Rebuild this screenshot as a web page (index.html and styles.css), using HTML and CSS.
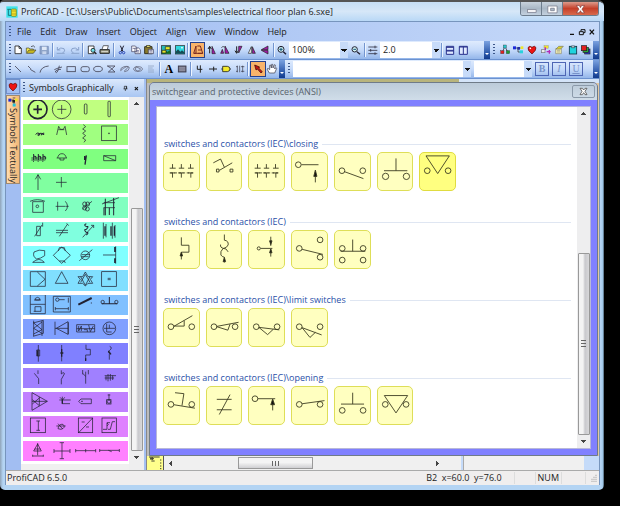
FILE: index.html
```html
<!DOCTYPE html>
<html lang="en">
<head>
<meta charset="utf-8">
<title>ProfiCAD</title>
<link rel="stylesheet" href="styles.css">
</head>
<body>
<div class="window">
  <header class="titlebar">
    <svg class="app-icon" viewBox="0 0 36 36"><rect x="1" y="1" width="34" height="34" fill="#3fe3ea"/><path d="M7 10V28M4 10h11M7 28h9" stroke="#157a80" stroke-width="3" fill="none"/><rect x="16" y="9" width="15" height="22" rx="3" fill="#f5e02a" stroke="#6b7a10" stroke-width="2"/><path d="M17 15h13M17 24h13" stroke="#9b9410" stroke-width="2"/></svg>
    <h1>ProfiCAD - [C:\Users\Public\Documents\samples\electrical floor plan 6.sxe]</h1>
    <div class="caption">
      <button aria-label="Minimize"><svg viewBox="0 0 42 39"><rect x="8" y="22" width="28" height="8" fill="#fff" stroke="#667" stroke-width="2"/></svg></button>
      <button aria-label="Maximize"><svg viewBox="0 0 42 39"><path d="M6 10h30v22H6zM15 17v8h12v-8z" fill="#fff" fill-rule="evenodd" stroke="#667" stroke-width="2"/></svg></button>
      <button class="close" aria-label="Close"><svg viewBox="0 0 42 39"><path d="M8 8h9l4 7 4-7h9l-8 12 8 12h-9l-4-7-4 7H8l8-12z" fill="#fff" stroke="#733" stroke-width="2"/></svg></button>
    </div>
  </header>

  <div class="client">
    <nav class="menubar">
      <i class="grip"></i>
      <button>File</button><button>Edit</button><button>Draw</button><button>Insert</button><button>Object</button><button>Align</button><button>View</button><button>Window</button><button>Help</button>
      <div class="mdi">
        <button aria-label="Minimize document"><svg viewBox="0 0 24 30"><path d="M6 22h12" stroke="#111" stroke-width="4"/></svg></button>
        <button aria-label="Restore document"><svg viewBox="0 0 24 30"><path d="M9 12V8h12v9h-4M4 14h12v9H4z" fill="none" stroke="#111" stroke-width="3"/></svg></button>
        <button aria-label="Close document"><svg viewBox="0 0 24 30"><path d="M5 8L18 22M18 8L5 22" stroke="#111" stroke-width="4"/></svg></button>
      </div>
    </nav>

    <div class="toolbar">
      <i class="grip"></i>
      <div class="tools tools-main">
        <button aria-label="New"><svg viewBox="38 130 36 36"><path d="M47 136h12l7 7v16H47zM59 136v7h7" fill="#fff" stroke="#222" stroke-width="2.5"/></svg></button>
        <button aria-label="Open"><svg viewBox="78 130 36 36"><path d="M82 156v-14h8l3 3h10v4" fill="#f4e84a" stroke="#443" stroke-width="2"/><path d="M82 158l8-10h21l-8 10z" fill="#c8b820" stroke="#443" stroke-width="2"/><path d="M96 138q8-6 12 2" fill="none" stroke="#222" stroke-width="2"/></svg></button>
        <button aria-label="Save"><svg viewBox="119 130 36 36"><path d="M125 137h25v23h-25z" fill="#8fa5c9" stroke="#6f87b4" stroke-width="2"/><rect x="131" y="138" width="14" height="10" fill="#dfe8f6"/><rect x="132" y="152" width="12" height="8" fill="#c9d6ec"/></svg></button>
        <i class="sep"></i>
        <button aria-label="Undo"><svg viewBox="169 130 36 36"><path d="M176 139v9h9M177 148q9-10 19-4 6 7-4 13M174 158h24" fill="none" stroke="#8ba3cc" stroke-width="3"/></svg></button>
        <button aria-label="Redo"><svg viewBox="208 130 36 36"><path d="M237 139v9h-9M236 148q-9-10-19-4-6 7 4 13M215 158h24" fill="none" stroke="#8ba3cc" stroke-width="3"/></svg></button>
        <i class="sep"></i>
        <button aria-label="Print preview"><svg viewBox="262 130 36 36"><path d="M269 136h17v23h-17z" fill="#fff" stroke="#222" stroke-width="2.5"/><circle cx="283" cy="149" r="6" fill="#6fe0e8" stroke="#222" stroke-width="2.5"/><path d="M287 154l6 6" stroke="#222" stroke-width="4"/></svg></button>
        <button aria-label="Print"><svg viewBox="301 130 36 36"><path d="M310 146l4-11h15l-3 11" fill="#fff" stroke="#222" stroke-width="2"/><path d="M304 147h28v11h-28z" fill="#999a80" stroke="#222" stroke-width="3"/><path d="M308 153h20" stroke="#fff" stroke-width="2"/></svg></button>
        <i class="sep"></i>
        <button aria-label="Cut"><svg viewBox="352 130 36 36"><path d="M365 135l8 18M375 135l-8 18" stroke="#223" stroke-width="3"/><circle cx="365" cy="156" r="3.5" fill="none" stroke="#2a49b8" stroke-width="3"/><circle cx="375" cy="156" r="3.5" fill="none" stroke="#2a49b8" stroke-width="3"/></svg></button>
        <button aria-label="Copy"><svg viewBox="393 130 36 36"><path d="M398 136h11l4 4v13h-15zM408 142h11l5 5v12h-16z" fill="#fff" stroke="#335" stroke-width="2"/><path d="M401 143h7M412 150h8M412 154h8" stroke="#447" stroke-width="2"/></svg></button>
        <button aria-label="Paste"><svg viewBox="433 130 36 36"><path d="M438 138h22v21h-22z" fill="#8b7b2c" stroke="#332" stroke-width="3"/><rect x="444" y="134" width="10" height="6" fill="#ddd36a" stroke="#332" stroke-width="2"/><path d="M449 146h15v13h-15z" fill="#fff" stroke="#224" stroke-width="2"/><path d="M452 150h9M452 154h9" stroke="#447" stroke-width="2"/></svg></button>
        <i class="sep"></i>
        <button aria-label="Insert symbol"><svg viewBox="483 130 36 36"><rect x="487" y="135" width="28" height="25" fill="#25b8b8" stroke="#222" stroke-width="2"/><path d="M488 159l9-12 8 6 9-5v11z" fill="#176b20"/><path d="M499 138h14v9h-14zM489 149h12v8h-12z" fill="#e4ea28" stroke="#222" stroke-width="2"/></svg></button>
        <button aria-label="Insert picture"><svg viewBox="523 130 36 36"><rect x="527" y="135" width="28" height="25" fill="#2fd6dd" stroke="#222" stroke-width="2"/><path d="M528 159v-6l7-7 7 7 5-4 7 6v4z" fill="#164c55"/><circle cx="547" cy="141" r="2.500" fill="#fff"/></svg></button>
        <i class="sep"></i>
        <button class="on" aria-label="Align symbols"><svg viewBox="574 130 36 36"><path d="M579 158l7-22v22zM590 136h9l7 22h-14M592 148h10M580 158h26" fill="none" stroke="#7a2a20" stroke-width="3"/></svg></button>
        <button aria-label="Rotate left"><svg viewBox="613 130 36 36"><path d="M624 158v-20M619 145l5-8 5 8" fill="none" stroke="#222" stroke-width="3"/><path d="M631 159v-22l10 22z" fill="#a11ca8" stroke="#222" stroke-width="2"/></svg></button>
        <button aria-label="Mirror"><svg viewBox="653 130 36 36"><path d="M658 158h9l-4-12zM671 158v-22l12 22z" fill="#a11ca8" stroke="#222" stroke-width="2"/><path d="M660 141q5-7 10-1" fill="none" stroke="#222" stroke-width="2"/></svg></button>
        <button aria-label="Rotate right"><svg viewBox="694 130 36 36"><path d="M705 137v20M700 150l5 8 5-8" fill="none" stroke="#222" stroke-width="3"/><path d="M711 137v20l10-20z" fill="#a11ca8" stroke="#222" stroke-width="2"/></svg></button>
        <button aria-label="Flip vertically"><svg viewBox="732 130 36 36"><path d="M739 158l9-20v20z" fill="#fff" stroke="#222" stroke-width="2"/><path d="M751 158v-20l9 20z" fill="#a11ca8" stroke="#222" stroke-width="2"/></svg></button>
        <button aria-label="Flip horizontally"><svg viewBox="773 130 36 36"><path d="M800 136v11h-20z" fill="#a11ca8" stroke="#222" stroke-width="2"/><path d="M800 160v-11h-20z" fill="#a11ca8" stroke="#222" stroke-width="2"/></svg></button>
        <i class="sep"></i>
        <button aria-label="Zoom in"><svg viewBox="827 130 36 36"><circle cx="842" cy="146" r="9" fill="#d5f3f3" stroke="#223" stroke-width="3"/><path d="M837 146h10M842 141v10" stroke="#157" stroke-width="3"/><path d="M849 153l8 8" stroke="#223" stroke-width="4"/></svg></button>
      </div>
      <label class="combo zoom-level"><select aria-label="Zoom"><option>100%</option></select></label>
      <button class="tool" aria-label="Zoom out"><svg viewBox="120 130 36 36"><circle cx="134" cy="146" r="8" fill="#d5f3f3" stroke="#223" stroke-width="3"/><path d="M130 146h8" stroke="#157" stroke-width="3"/><path d="M141 153l9 8" stroke="#223" stroke-width="4"/></svg></button>
      <i class="sep"></i>
      <button class="tool" aria-label="Line spacing"><svg viewBox="170 130 36 36"><path d="M174 139h27M174 149h27M174 159h27M194 135v8M181 145v8M194 155v8" stroke="#334" stroke-width="2.500"/></svg></button>
      <label class="combo line-width"><select aria-label="Line width"><option>2.0</option></select></label>
      <i class="sep"></i>
      <button class="tool" aria-label="Tile horizontally"><svg viewBox="405 130 36 36"><path d="M412 137h22v24h-22zM412 140h22M412 149h22M412 151h22" fill="#dfe9ff" stroke="#27308c" stroke-width="3"/></svg></button>
      <button class="tool" aria-label="Tile vertically"><svg viewBox="445 130 36 36"><path d="M452 137h24v24h-24zM452 139h24M464 138v22" fill="#dfe9ff" stroke="#27308c" stroke-width="3"/></svg></button>
      <span class="fill"></span>
      <button class="overflow" aria-label="Toolbar options"></button>
      <i class="grip"></i>
      <div class="tools tools-panels">
        <button aria-label="Tree"><svg viewBox="564 130 36 36"><path d="M582 138l-9 17M582 138l9 17" stroke="#222" stroke-width="2"/><rect x="577" y="133" width="9" height="9" fill="#29c7cf" stroke="#222"/><rect x="569" y="150" width="10" height="9" fill="#e02222" stroke="#222"/><rect x="586" y="150" width="10" height="9" fill="#1d9c35" stroke="#222"/></svg></button>
        <button aria-label="Symbols"><svg viewBox="605 130 36 36"><path d="M615 142h8v12h6M623 142h8" fill="none" stroke="#222" stroke-width="2"/><rect x="608" y="137" width="9" height="9" fill="#1b2ad8"/><rect x="621" y="139" width="8" height="8" fill="#222ea0"/><rect x="631" y="137" width="8" height="8" fill="#eee72c"/><rect x="628" y="149" width="10" height="9" fill="#27d2dd"/></svg></button>
        <button aria-label="Favourites"><svg viewBox="644 130 36 36"><path d="M662 160q-14-11-12-19 5-8 12-1 8-7 12 1 1 8-12 19z" fill="#ee1414" stroke="#511" stroke-width="2"/><circle cx="657" cy="143" r="2.500" fill="#fff"/></svg></button>
        <button aria-label="Links"><svg viewBox="686 130 36 36"><rect x="698" y="135" width="13" height="8" fill="#f0e22e" stroke="#886"/><rect x="690" y="147" width="11" height="9" fill="#eee" stroke="#777" stroke-width="2"/><path d="M706 153h12M714 148v11M702 140v8" stroke="#b32ab8" stroke-width="4"/></svg></button>
        <button aria-label="Properties"><svg viewBox="726 130 36 36"><path d="M734 144h17v15h-17z" fill="#f4f0b0" stroke="#887" stroke-width="2"/><path d="M735 145l8-8h14l-8 8z" fill="#dcd22c" stroke="#776" stroke-width="2"/><path d="M738 150h9M738 154h9" stroke="#998" stroke-width="2"/></svg></button>
        <button aria-label="Clipboard"><svg viewBox="766 130 36 36"><rect x="773" y="137" width="22" height="23" fill="#20d3dd" stroke="#134" stroke-width="2.500"/><path d="M779 136h10v5h-10z" fill="#fff" stroke="#134" stroke-width="2"/></svg></button>
        <button aria-label="Layers"><svg viewBox="807 130 36 36"><rect x="821" y="145" width="16" height="15" fill="#2a3bdc" stroke="#222" stroke-width="2"/><rect x="816" y="140" width="16" height="15" fill="#24a839" stroke="#222" stroke-width="2"/><rect x="811" y="135" width="16" height="15" fill="#e32020" stroke="#222" stroke-width="2"/></svg></button>
      </div>
      <button class="overflow" aria-label="Panel options"></button>
    </div>

    <div class="toolbar">
      <i class="grip"></i>
      <div class="tools tools-draw">
        <button aria-label="Line"><svg viewBox="36 186 36 36"><path d="M45 195l18 18" stroke="#445" stroke-width="2.500"/></svg></button>
        <button aria-label="Polyline"><svg viewBox="77 186 36 36"><path d="M86 195l8 8v3l14 8" fill="none" stroke="#445" stroke-width="2.500"/></svg></button>
        <button aria-label="Arc"><svg viewBox="117 186 36 36"><path d="M123 215q3-18 26-20" fill="none" stroke="#445" stroke-width="2.500"/></svg></button>
        <button aria-label="Curve"><svg viewBox="158 186 36 36"><path d="M165 206q12-6 23-8M180 194q-4 20-9 21-4-1-2-5 8-6 16-5" fill="none" stroke="#445" stroke-width="2.500"/></svg></button>
        <button aria-label="Rectangle"><svg viewBox="198 186 36 36"><rect x="204" y="197" width="25" height="15" fill="none" stroke="#445" stroke-width="2.500"/></svg></button>
        <button aria-label="Rounded rectangle"><svg viewBox="238 186 36 36"><rect x="244" y="197" width="25" height="15" rx="6" fill="none" stroke="#445" stroke-width="2.500"/></svg></button>
        <button aria-label="Ellipse"><svg viewBox="278 186 36 36"><ellipse cx="296" cy="204" rx="13" ry="8" fill="none" stroke="#445" stroke-width="2.500"/></svg></button>
        <button aria-label="Polygon"><svg viewBox="319 186 36 36"><path d="M326 195h23l-20 18h20l-14-13z" fill="none" stroke="#445" stroke-width="2.500"/></svg></button>
        <button aria-label="Closed curve"><svg viewBox="359 186 36 36"><path d="M364 209q-2-9 10-12 16-3 16 4-2 10-14 11-4-2 7-9 8-6-1-6-12 5-18 12z" fill="none" stroke="#556" stroke-width="2"/></svg></button>
        <button aria-label="Node"><svg viewBox="399 186 36 36"><ellipse cx="417" cy="204" rx="13" ry="7" fill="none" stroke="#556" stroke-width="2"/><path d="M411 197l14 7-8 7-8-5z" fill="none" stroke="#556" stroke-width="2"/></svg></button>
        <button aria-label="Hatch"><svg viewBox="439 186 36 36"><path d="M448 195h18M448 201h14M448 207h18M448 213h18" stroke="#8797b5" stroke-width="2"/></svg></button>
        <i class="sep"></i>
        <button class="letter" aria-label="Text">A</button>
        <button aria-label="Image"><svg viewBox="531 186 36 36"><rect x="538" y="195" width="23" height="18" fill="#778" stroke="#334" stroke-width="2.500"/><path d="M541 200h17M541 204h17M541 208h17" stroke="#aab" stroke-width="1.500"/></svg></button>
        <i class="sep"></i>
        <button aria-label="Wire"><svg viewBox="580 186 36 36"><path d="M590 194v11h15M599 193v22" fill="none" stroke="#222" stroke-width="3"/></svg></button>
        <button aria-label="Connection"><svg viewBox="620 186 36 36"><path d="M626 204h24M640 197v14" stroke="#222" stroke-width="3"/></svg></button>
        <button aria-label="Label"><svg viewBox="662 186 36 36"><path d="M670 196h14q8 1 8 8t-8 8h-14z" fill="#f3ea2c" stroke="#222" stroke-width="2.500"/><path d="M665 204h5M692 204h3" stroke="#222" stroke-width="2"/></svg></button>
        <button aria-label="Terminals"><svg viewBox="701 186 36 36"><path d="M711 194v20M718 194v20M727 194v20M707 197h5M707 211h5M722 197h10M722 211h10" stroke="#334" stroke-width="2"/></svg></button>
        <i class="sep"></i>
        <button class="on" aria-label="Select"><svg viewBox="752 186 36 36"><path d="M760 192l15 6-3 3 11 11-4 4-11-12-4 3z" fill="#c21a14" stroke="#300" stroke-width="2"/></svg></button>
        <button aria-label="Pan"><svg viewBox="795 186 36 36"><path d="M805 216l-7-12 3-2 5 4v-13l3-1 2 9 1-11h3l1 11 4-10 3 1-2 12 4-4 2 2-6 14z" fill="#fff" stroke="#334" stroke-width="2"/></svg></button>
      </div>
      <button class="overflow" aria-label="Drawing options"></button>
      <i class="grip"></i>
      <label class="combo font-name"><select aria-label="Font"><option></option></select></label>
      <label class="combo font-size"><select aria-label="Font size"><option></option></select></label>
      <div class="styles">
        <button><b>B</b></button><button><em>I</em></button><button><u>U</u></button>
      </div>
      <button class="overflow" aria-label="Font options"></button>
    </div>

    <main class="workspace">
      <div class="dock-tabs">
        <button class="dock-tab-heart" aria-label="Favourites"><svg viewBox="644 130 36 36"><path d="M662 160q-14-11-12-19 5-8 12-1 8-7 12 1 1 8-12 19z" fill="#ee1414" stroke="#511" stroke-width="2"/></svg></button>
        <button class="dock-tab"><svg viewBox="0 0 30 36"><rect x="1" y="8" width="9" height="9" fill="#1b2ad8"/><path d="M10 12h8v13M14 6h8" fill="none" stroke="#222" stroke-width="2"/><rect x="13" y="12" width="8" height="8" fill="#222"/><rect x="21" y="8" width="8" height="8" fill="#eee72c"/><rect x="14" y="23" width="9" height="9" fill="#27c2dd"/></svg><span>Symbols Textually</span></button>
      </div>

      <section class="palette">
        <header><i class="grip"></i><h2>Symbols Graphically</h2>
          <button aria-label="Pin"><svg viewBox="0 0 27 27"><path d="M9 5h9v10M9 5v10M6 15h15M13 15v8M17 5v10" fill="none" stroke="#111" stroke-width="2.500"/></svg></button>
          <button aria-label="Close panel"><svg viewBox="0 0 27 27"><path d="M7 8l12 12M19 8L7 20" stroke="#111" stroke-width="4"/></svg></button>
        </header>
        <div class="palette-body">
          <div class="swatches">
            <button class="c1" aria-label="Lamps"><svg viewBox="70 75 313 61"><circle cx="113" cy="103" r="28" stroke-width="5"/><path d="M100 103h26M113 90v26" stroke-width="5"/><circle cx="185" cy="103" r="28"/><path d="M172 103h27M185 90v27"/><rect x="253" y="87" width="8" height="30" rx="3"/><rect x="324" y="79" width="7" height="46" rx="2"/></svg></button>
            <button class="c2" aria-label="Coils"><svg viewBox="70 148 313 61"><path d="M107 180q4-8 10-4 5 6-2 7-6-2 5-7 6-3 4 6M126 181v-6l5 6v-7" stroke-width="3"/><path d="M170 181l6-26 5 9h9l5-9 5 26M175 165h18M250 150l7 6-9 7 9 6-9 7 9 7-9 7 9 6-5 7"/><rect x="305" y="154" width="44" height="44"/><circle cx="327" cy="176" r="1.500"/></svg></button>
            <button class="c3" aria-label="Contacts"><svg viewBox="70 221 313 61"><path d="M94 248h45M94 254h42"/><path d="M101 236v18M115 236v18M129 236v18M101 243q9-3 7 9M115 243q9-3 7 9M129 243q9-3 7 9M99 258h3M113 258h3M127 258h3" stroke-width="3"/><path d="M170 248h31M173 248q2-13 13-13 10 0 13 13M180 248v6h12v-6"/><path d="M259 240l-4 28M254 242v12" stroke-width="4"/><path d="M311 241h36v15h-36zM311 241l36 15"/></svg></button>
            <button class="c4" aria-label="Arrows"><svg viewBox="70 294 313 61"><path d="M114 345v-46M106 313l8-14 8 14M168 322h32M184 306v31"/></svg></button>
            <button class="c5" aria-label="Sockets"><svg viewBox="70 367 313 61"><path d="M98 413v-32h32v32zM90 380q22-10 45 0M167 395h28M173 381v27M196 380q13 15 0 29M196 395h10M247 403l29-23"/><circle cx="112" cy="395" r="4"/><circle cx="254" cy="388" r="6"/><circle cx="263" cy="388" r="6"/><circle cx="254" cy="400" r="6"/><circle cx="262" cy="403" r="6"/><path d="M306 388l51-19M311 384h34M311 399h34"/><path d="M316 372v50M328 399v22M341 370v52M312 399v23" stroke-width="3"/></svg></button>
            <button class="c6" aria-label="Variable parts"><svg viewBox="70 21 313 61"><path d="M110 34h11v28h-11zM104 64l22-34M128 23v12M168 46h36M168 53h36M178 64l24-36M200 25l6 7M248 67l33-36M273 31h8v8"/><path d="M259 26q-10 3 0 9q10-2 0 8q-10 0 0 9q10 0 0 8" stroke-width="3"/><path d="M310 23v48M318 27v40M337 23v48M345 30v38"/><path d="M315 34v28M333 34v28M343 34v28" stroke-width="4"/></svg></button>
            <button class="c7" aria-label="Machines"><svg viewBox="70 94 313 61"><path d="M102 112q15-9 32-4v15q-12 9-24 10-13-7-8-21zM98 143q20-17 35 0zM160 122l25-25 26 25-26 24zM175 109l3-10h15l3 10M178 139h15l3 6M238 138l39-33M246 120h24M244 126h22"/><circle cx="256" cy="122" r="13"/><path d="M309 121h38M347 95v52"/><path d="M345 97v15M345 131v14" stroke-width="5"/></svg></button>
            <button class="c8" aria-label="Boxes"><svg viewBox="70 167 313 61"><path d="M91 172h45v44H91zM112 173l23 22-23 20M166 207l19-35 19 35zM256 173l8 14h14l-7 8 7 12h-14l-8 8-8-8h-14l7-12-7-8h14zM242 187l14 26 14-26M242 204l14-24 14 24"/><rect x="305" y="172" width="44" height="44"/><path d="M323 192h9M323 196h9"/></svg></button>
            <button class="c9" aria-label="Switch boxes"><svg viewBox="70 240 313 61"><path d="M91 239h45v57H91zM91 268h45M105 275h18v14h-18zM101 289h5M106 250q7-6 13 0v5h-13zM102 255h21M160 244h51v47h-51zM177 254h17M205 248v15M166 281h39M166 276v10M205 276v10M274 262v4"/><circle cx="172" cy="254" r="5"/><path d="M235 269l40-20" stroke-width="6"/><path d="M305 266h47M328 246v20" stroke-width="3"/><circle cx="308" cy="261" r="5"/><circle cx="349" cy="261" r="5"/></svg></button>
            <button class="c10" aria-label="Converters"><svg viewBox="70 313 313 61"><path d="M101 318v46M126 318v46M99 325l31-8v39l-31 9M101 325l25 20-25 13M126 322l-25 19 25 15M165 321v40M169 341l35-20v38zM205 323v36M165 341h39M230 330h54v22h-54zM230 342h54M236 334v15l8-15v15M252 345h10v7M266 331l5 20 9-17"/><circle cx="328" cy="341" r="19"/><path d="M312 341h33M320 327v25h15M328 330v11"/></svg></button>
            <button class="c11" aria-label="Poles"><svg viewBox="70 386 313 61"><path d="M115 392v50M110 407h9v18h-9zM185 392v49M258 391v14h13v17h-14v14M329 396q10 4 0 12-9 6 2 10M328 418v18"/><path d="M113 408v17M185 404v23M181 416h9M257 432v8M325 410l8 10" stroke-width="4"/></svg></button>
            <button class="c12" aria-label="Switches"><svg viewBox="70 54 313 61"><path d="M114 61v11M103 70l13 16v16M184 61v11q9-8 9 0l-9 16v15M257 65v36M248 60v13M265 60v13M248 70l9 9M314 77h34M314 84h28M318 78v13M324 72v22M331 72v20M338 76v14"/></svg></button>
            <button class="c13" aria-label="Amplifiers"><svg viewBox="70 127 313 61"><path d="M96 129v53l46-27zM96 155h46M118 142v26M97 150l21 18M97 163l21-18M178 151h34M187 162h23M180 143l8 8 6-8M187 141v21M236 155l7-7h31v14h-31zM243 155h6M327 134v17M323 136h8"/><path d="M187 150v12" stroke-width="4"/><rect x="320" y="150" width="13" height="13"/><circle cx="327" cy="156" r="5"/></svg></button>
            <button class="c14" aria-label="Meters"><svg viewBox="70 200 313 61"><rect x="91" y="206" width="45" height="44"/><path d="M109 215h11M115 215v28M109 243h11M169 230h28M174 223l14 16M174 238q2-15 15-13 10 10-6 15z"/><rect x="235" y="206" width="43" height="44"/><path d="M236 250l42-44M245 218h9M258 233h9"/><rect x="306" y="206" width="43" height="44"/><path d="M309 240h12v-20h9M321 230q8-5 0-9M324 240h7l6-23h8"/></svg></button>
            <button class="c15" aria-label="Connections"><svg viewBox="70 272 313 61"><path d="M113 278v37M98 317h32M98 313v6M130 313v6M101 302l12-21 11 21zM104 296h18M162 302h48M186 277v48M162 296v12M210 296v12M179 277h13M179 325h13M227 301h60M227 296v10M287 296v10M257 296v10M299 300h59M299 296v9M358 296v9M325 300l10 4"/></svg></button>
          </div>
          <div class="scroll"><i class="up"></i><i class="space-top"></i><i class="thumb"></i><i class="down"></i></div>
        </div>
      </section>

      <section class="canvas">
        <div class="sheet-top"></div>
        <div class="sheet"></div>
        <footer class="sheet-foot"><i class="ruler"><svg viewBox="0 0 42 42"><path d="M0 3h32M3 8h12M6 3v9M10 3v9M7 15h10M33 12h4M33 21h4M33 30h4M33 38h4" stroke="#443" stroke-width="3" fill="none"/></svg></i><div class="hscroll"><i class="left"></i><i class="hthumb"></i><i class="right"></i></div><i class="corner"></i></footer>
      </section>

      <section class="dialog">
        <header><h2>switchgear and protective devices (ANSI)</h2><button aria-label="Close dialog"><svg viewBox="0 0 27 27"><path d="M3 4h7l4 5 4-5h6l-6 9 6 10h-6l-4-6-4 6H3l6-10z" fill="#fff" stroke="#555" stroke-width="2.500"/></svg></button></header>
        <div class="dialog-body">
          <div class="library">
            <h3>switches and contactors (IEC)\closing</h3>
            <div class="tiles">
              <button aria-label="Three-pole contact"><svg viewBox="70 232 110 117"><path d="M88 280h19M97 267v13M117 280h17M125 267v13M146 280h18M154 267v13M88 295h17M97 295v15M116 295h16M125 295v15M146 295h17M155 295v15"/><path d="M90 295h72" stroke-dasharray="8 5"/></svg></button>
              <button aria-label="Hand-operated contact"><svg viewBox="198 232 110 117"><path d="M237 287l41-24M253 277l-12-26-23 12"/><path d="M228 283h8v9h-8zM271 283h9v9h-9z"/></svg></button>
              <button aria-label="Three-pole switch"><svg viewBox="325 232 110 117"><path d="M343 280h19M352 267v13M372 280h17M380 267v13M401 280h18M409 267v13M343 295h17M352 295v15M371 295h16M380 295v15M401 295h17M410 295v15"/><path d="M345 295h72" stroke-dasharray="8 5"/></svg></button>
              <button aria-label="Pressure contact"><svg viewBox="453 232 110 117"><circle cx="473" cy="269" r="9"/><path d="M483 269h54M527 325v-30"/><path d="M527 286l-5 20h10z" fill="#111"/></svg></button>
              <button aria-label="Open contact"><svg viewBox="582 232 110 117"><circle cx="604" cy="288" r="9"/><circle cx="670" cy="288" r="9"/><path d="M612 291l60 22"/></svg></button>
              <button aria-label="Push button"><svg viewBox="18 232 110 117"><path d="M37 288h74M75 249v39"/><circle cx="42" cy="306" r="10"/><circle cx="108" cy="306" r="10"/></svg></button>
              <button class="active" aria-label="Limit contact"><svg viewBox="147 232 110 117"><path d="M166 241h74l-37 56z"/><circle cx="170" cy="288" r="9"/><circle cx="236" cy="288" r="9"/></svg></button>
            </div>
            <h3>switches and contactors (IEC)</h3>
            <div class="tiles">
              <button aria-label="Thermal contact"><svg viewBox="40 76 110 117"><path d="M95 96v25h24v22H95v23"/><path d="M95 143l-4 12h8z" fill="#111"/></svg></button>
              <button aria-label="Magnetic contact"><svg viewBox="168 76 110 117"><path d="M223 87v18q14 2 12 15-4 9-14 11-12-2-10-12M235 142q-6-13-16-11-10 10-7 21 4 6 11 7v17"/><path d="M223 160l-4 13h8z" fill="#111"/></svg></button>
              <button aria-label="Double contact"><svg viewBox="295 76 110 117"><circle cx="326" cy="131" r="5"/><path d="M332 131h37M364 94v29M364 157v-23"/><path d="M364 119l-4-12h8zM364 133l-4 12h8z" fill="#111"/></svg></button>
              <button aria-label="Changeover contact"><svg viewBox="423 76 110 117"><circle cx="446" cy="131" r="9"/><circle cx="512" cy="104" r="9"/><circle cx="512" cy="159" r="9"/><path d="M455 134l66 16"/></svg></button>
              <button aria-label="Double push button"><svg viewBox="551 76 110 117"><path d="M569 140h78M607 103v37"/><circle cx="574" cy="131" r="9"/><circle cx="640" cy="131" r="9"/><circle cx="574" cy="168" r="9"/><circle cx="640" cy="168" r="9"/></svg></button>
            </div>
            <h3>switches and contactors (IEC)\limit switches</h3>
            <div class="tiles">
              <button aria-label="Limit switch, open"><svg viewBox="40 310 110 117"><circle cx="62" cy="366" r="9"/><circle cx="128" cy="366" r="9"/><path d="M71 365l59-34M104 347v17H72"/></svg></button>
              <button aria-label="Limit switch, held closed"><svg viewBox="168 310 110 117"><circle cx="190" cy="366" r="9"/><circle cx="257" cy="366" r="9"/><path d="M199 365l69-13M199 366l35 11 7-19"/></svg></button>
              <button aria-label="Limit switch, closed"><svg viewBox="295 310 110 117"><circle cx="318" cy="366" r="9"/><circle cx="384" cy="366" r="9"/><path d="M326 368l65 8M326 368l28 23 18-17"/></svg></button>
              <button aria-label="Limit switch, held open"><svg viewBox="423 310 110 117"><circle cx="446" cy="366" r="9"/><circle cx="512" cy="366" r="9"/><path d="M455 369l62 23M455 369l25 31 17-16"/></svg></button>
            </div>
            <h3>switches and contactors (IEC)\opening</h3>
            <div class="tiles">
              <button aria-label="Hand-operated break contact"><svg viewBox="40 109 110 117"><circle cx="62" cy="164" r="9"/><circle cx="128" cy="164" r="9"/><path d="M71 165l67 11M97 168l6-38-28-3"/></svg></button>
              <button aria-label="Break contact"><svg viewBox="168 109 110 117"><path d="M199 148h47M199 181h47M207 196l34-63"/></svg></button>
              <button aria-label="Pressure break contact"><svg viewBox="295 109 110 117"><circle cx="314" cy="146" r="9"/><path d="M323 146h55M370 183v-25"/><path d="M370 147l-6 18h12z" fill="#111"/></svg></button>
              <button aria-label="Closed contact"><svg viewBox="423 109 110 117"><circle cx="446" cy="164" r="9"/><circle cx="512" cy="164" r="9"/><path d="M455 162l71-10"/></svg></button>
              <button aria-label="Push button, break"><svg viewBox="551 109 110 117"><path d="M570 163h73M607 127v36"/><circle cx="574" cy="183" r="9"/><circle cx="640" cy="183" r="9"/></svg></button>
              <button aria-label="Limit break contact"><svg viewBox="679 109 110 117"><path d="M699 136h74l-37 55z"/><circle cx="702" cy="164" r="9"/><circle cx="768" cy="164" r="9"/></svg></button>
            </div>
          </div>
          <div class="scroll lib-scroll"><i class="up"></i><i class="space-top"></i><i class="thumb"></i><i class="down"></i></div>
        </div>
      </section>
    </main>

    <footer class="status"><span>ProfiCAD 6.5.0</span><span class="coords">B2&nbsp; x=60.0&nbsp; y=76.0</span><i class="cell"></i><span class="num">NUM</span><i class="cell end"></i><svg viewBox="0 0 24 24"><path d="M16 4h4M10 10h4M16 10h4M4 16h4M10 16h4M16 16h4M4 22h4M10 22h4M16 22h4" stroke="#bbb" stroke-width="4"/></svg></footer>
  </div>
</div>
</body>
</html>
```
FILE: styles.css
```css
* { box-sizing: border-box; }
body {
  margin: 0;
  padding: 0 16px 16px 0;
  background: #000;
  color: #222;
  font: 9px/14px "Open Sans", "Noto Sans", sans-serif;
}
button, select { font: inherit; color: inherit; border: 0; padding: 0; background: none; }
h1, h2, h3 { margin: 0; font: inherit; }
svg { display: block; }
i { display: block; }

.window {
  display: flex;
  flex-direction: column;
  height: calc(100vh - 16px);
  padding: 0 4px 5px 5px;
  background: linear-gradient(90deg, #8fa3b8, #b4d4f3 3px, #b4d4f3 calc(100% - 3px), #9cc4e4 calc(100% - 1px), #33404c);
  border-top: 2px solid #555;
  border-radius: 4px 6px 5px 5px;
  overflow: hidden;
}
.titlebar {
  display: flex;
  flex: 0 0 19px;
  align-items: center;
  margin: 0 -4px 0 -5px;
  padding: 0 5px 0 6px;
  background: linear-gradient(#c6def5, #d6e7f8 50%, #b9d8f6);
}
.app-icon { width: 12px; height: 12px; margin-right: 3px; }
.titlebar h1 { flex: 1; white-space: nowrap; }
.caption { display: flex; align-self: flex-start; height: 14px; border: 1px solid #6c7c8c; border-top: 0; border-radius: 0 0 3px 3px; overflow: hidden; }
.caption button { width: 21px; background: linear-gradient(#c8d2dc, #a9b7c5 50%, #c3d1df); border-right: 1px solid #6c7c8c; }
.caption .close { width: 35px; border: 0; background: linear-gradient(#dc9b8c, #c5402a 50%, #d8694c); }
.caption svg { height: 12px; margin: 0 auto; }

.client { display: flex; flex-direction: column; flex: 1; min-height: 0; border: 1px solid #7795bd; border-bottom: 0; background: #a4c0f2; }
.menubar { display: flex; align-items: center; flex: 0 0 19px; gap: 9px; padding-left: 3px; background: linear-gradient(90deg, #9ebbf1, #c6d9f9); }
.menubar > .grip + button { margin-left: -3px; }
.mdi { display: flex; gap: 2px; margin-left: auto; padding-right: 3px; }
.mdi svg { width: 8px; height: 10px; }

.grip { flex: 0 0 2px; height: 12px; background: repeating-linear-gradient(#3c5688 0 1px, transparent 1px 3px); }
.toolbar { display: flex; align-items: center; flex: 0 0 19px; padding-left: 3px; background: linear-gradient(#dfebfd, #c5dafa 50%, #94b6ea); border-bottom: 1px solid #6c92d0; }
.tools { display: flex; align-items: center; height: 100%; }
.tools button { display: flex; flex: 1; align-items: center; justify-content: center; min-width: 0; height: 16px; }
.tools-main { flex: 0 0 278px; }
.tools-draw { flex: 0 0 268px; }
.tools-panels { flex: 0 0 95px; }
.tools svg, .tool svg { width: 12px; height: 12px; }
.tool { flex: 0 0 13px; }
.tools .on { background: #f9b46a; border: 1px solid #26418c; }
.tools .letter { font: bold 12px "Liberation Serif", serif; color: #000; }
.sep { flex: 0 0 4px; height: 14px; background: linear-gradient(90deg, transparent 1px, #7395cf 1px 2px, #eef5ff 2px 3px, transparent 3px); }
.combo { position: relative; display: flex; align-items: center; height: 16px; background: #fff; }
.combo select { width: 100%; height: 16px; padding: 0 3px; appearance: none; }
.combo::after { content: ""; position: absolute; right: 0; top: 0; width: 8px; height: 100%; background: conic-gradient(from -45deg at 50% 100%, #111 90deg, transparent 0) center / 6px 3px no-repeat, #c7dbf9; }
.zoom-level { flex: 0 0 59px; margin-right: 2px; }
.line-width { flex: 0 0 60px; }
.font-name { flex: 1; }
.font-size { flex: 0 0 58px; margin-left: 3px; }
.fill { flex: 1; }
.overflow { flex: 0 0 6px; height: 100%; background: linear-gradient(#7ba2e0, #2a56a8 70%, #123a8c); position: relative; }
.overflow::after { content: ""; position: absolute; left: 1px; bottom: 2px; border: 2px solid transparent; border-top-color: #fff; }
.overflow + .grip { margin: 0 3px; }
.styles { display: flex; gap: 3px; padding: 0 10px 0 3px; }
.styles button { width: 14px; height: 14px; border: 1px solid #4e66b4; color: #7892c8; font: 10px/12px "Liberation Serif", serif; }

.workspace { position: relative; display: flex; flex: 1; min-height: 0; }
.dock-tabs { flex: 0 0 15px; background: #a2bef2; }
.dock-tabs button { display: block; width: 14px; }
.dock-tab-heart { height: 15px; border: 1px solid #7190c8; }
.dock-tab-heart svg { width: 12px; height: 12px; }
.dock-tabs .dock-tab { display: flex; flex-direction: column; align-items: center; height: 89px; margin-top: 1px; background: linear-gradient(90deg, #ffdcae, #f3b877); border: 1px solid #a08a70; }
.dock-tab svg { width: 10px; height: 12px; margin: 0 1px; }
.dock-tab span { display: block; writing-mode: vertical-rl; line-height: 12px; white-space: nowrap; }

.palette { display: flex; flex-direction: column; flex: 0 0 123px; min-width: 0; background: #f0f0f0; }
.palette header { display: flex; align-items: center; flex: 0 0 18px; gap: 4px; padding: 0 4px 0 2px; background: linear-gradient(#dce9fc, #a9c6f2); }
.palette h2 { flex: 1; white-space: nowrap; }
.palette header svg { width: 7px; height: 7px; }
.palette-body { display: flex; flex: 1; min-height: 0; }
.swatches { display: grid; grid-template-rows: repeat(15, minmax(0, 1fr)); gap: 4px; flex: 1; margin-bottom: 6px; padding: 3px 1px 3px 2px; background: #fff; }
.swatches svg { width: 100%; height: 100%; fill: none; stroke: #223; stroke-width: 2.2; }
.c1 { background: #c0ff80; } .c2 { background: #a0ff80; } .c3 { background: #80ff80; }
.c4 { background: #80ffa0; } .c5 { background: #80ffc0; } .c6 { background: #80ffdf; }
.c7 { background: #80ffff; } .c8 { background: #80dfff; } .c9 { background: #80c0ff; }
.c10 { background: #80a0ff; } .c11 { background: #8080ff; } .c12 { background: #a080ff; }
.c13 { background: #c080ff; } .c14 { background: #df80ff; } .c15 { background: #ff80ff; }

.scroll { display: flex; flex-direction: column; align-items: center; flex: 0 0 13px; background: #eeeeef; }
.palette .scroll { flex-basis: 15px; }
.up, .down { flex: 0 0 13px; width: 100%; }
.up { background: conic-gradient(from 135deg at 50% 0, #444 90deg, transparent 0) center / 5px 3px no-repeat; }
.down { background: conic-gradient(from -45deg at 50% 100%, #444 90deg, transparent 0) center / 5px 3px no-repeat; }
.space-top { flex: 98; }
.thumb { flex: 242; width: 12px; border: 1px solid #999; border-radius: 1px; background: repeating-linear-gradient(#666 0 1px, transparent 1px 3px) center / 5px 7px no-repeat, linear-gradient(90deg, #f4f4f4 40%, #c9c9cd 60%, #d8d8da); }
.palette .down { margin-bottom: 6px; }

.canvas { display: flex; flex-direction: column; flex: 1; min-width: 0; margin-left: 2px; border-left: 1px solid #888; background: #aab4c4; }
.sheet-top { flex: 0 0 4px; background: linear-gradient(90deg, #b8b47c 0 69%, #d4e4f8 69%); }
.sheet { flex: 1; background: linear-gradient(90deg, #bcbcbc calc(100% - 3px), #e3c8a0 0); }
.sheet-foot { display: flex; flex: 0 0 14px; background: #c5dbf9; }
.ruler { flex: 0 0 17px; background: #ffff8c; border-right: 1px solid #555; }
.ruler svg { width: 14px; height: 14px; margin-left: auto; }
.hscroll { display: flex; align-items: center; flex: 0 0 297px; background: #f0f0f0; }
.left, .right { flex: 0 0 12px; height: 12px; }
.left { background: conic-gradient(from 45deg at 0 50%, #444 90deg, transparent 0) center / 3px 5px no-repeat; }
.right { margin-left: 118px; background: conic-gradient(from 225deg at 100% 50%, #444 90deg, transparent 0) center / 3px 5px no-repeat; }
.hthumb { flex: 0 0 75px; height: 12px; margin-left: 62px; border: 1px solid #999; background: repeating-linear-gradient(90deg, #666 0 1px, transparent 1px 3px) center / 7px 5px no-repeat, linear-gradient(#f4f4f4 45%, #cfcfd2); }
.corner { flex: 0 0 121px; margin-left: 2px; background: #f0f0f0; border-left: 1px solid #aaa; }

.dialog { position: absolute; inset: 3px 1px 14px 143px; display: flex; flex-direction: column; border: 1px solid #6f7b88; border-radius: 5px 5px 0 0; background: #8080ff; overflow: hidden; }
.dialog header { display: flex; align-items: center; flex: 0 0 17px; padding: 0 2px 0 2px; background: linear-gradient(#bccbd9, #d0dde9); color: #59646e; }
.dialog h2 { flex: 1; }
.dialog header button { width: 23px; height: 13px; border: 1px solid #8b9aaa; border-radius: 2px; }
.dialog header svg { height: 9px; width: 9px; margin: 0 auto; }
.dialog-body { display: flex; flex: 1; min-height: 0; margin: 6px; border: 1px solid #b8b8d8; background: #fff; }
.library { flex: 1; padding: 30px 6px 0 6px; }
.library h3 { display: flex; align-items: center; gap: 4px; height: 14px; padding-left: 1px; color: #2a50a8; white-space: nowrap; }
.library h3::after { content: ""; flex: 1; height: 1px; background: #dfe6f2; }
.tiles { display: grid; grid-template-columns: repeat(7, 1fr); gap: 6px; max-width: 293px; margin: 1px 0 24px; }
.tiles button { height: 39px; border: 1px solid #dede58; border-radius: 5px; background: #ffffc0; }
.tiles .active { background: #ffff80; border-color: #e0dc40; }
.tiles svg { width: 100%; height: 39px; margin: -1px 0; fill: none; stroke: #3a3a20; stroke-width: 2.8; }
.lib-scroll .space-top { flex: 133; }
.lib-scroll .thumb { flex: 181; }

.status { display: flex; align-items: center; flex: 0 0 14px; padding-left: 1px; background: #f0eeee; border-top: 1px solid #aaa; white-space: nowrap; }
.coords { margin-left: auto; }
.cell { width: 22px; height: 12px; margin: 0 2px 0 12px; border: solid #ddd; border-width: 0 1px; }
.num { padding-right: 2px; }
.end { width: 25px; margin: 0 4px 0 0; }
.status svg { width: 8px; height: 8px; margin-right: 1px; }
```
